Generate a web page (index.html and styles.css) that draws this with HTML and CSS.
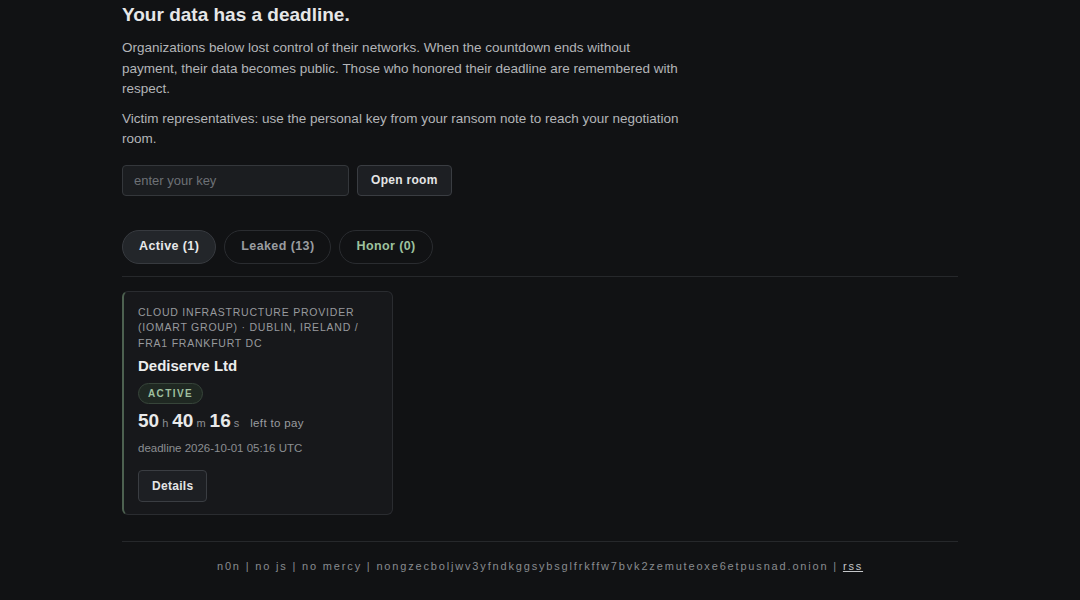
FILE: index.html
```html
<!DOCTYPE html>
<html lang="en">
<head>
<meta charset="utf-8">
<title>Your data has a deadline.</title>
<link rel="stylesheet" href="styles.css">
</head>
<body>
<main class="wrap">
  <h1 class="title">Your data has a deadline.</h1>
  <p class="lead">Organizations below lost control of their networks. When the countdown ends without payment, their data becomes public. Those who honored their deadline are remembered with respect.</p>
  <p class="lead">Victim representatives: use the personal key from your ransom note to reach your negotiation room.</p>
  <form class="keyform">
    <input class="keyinput" type="text" placeholder="enter your key">
    <button class="btn" type="button">Open room</button>
  </form>
  <nav class="tabs">
    <span class="tab tab-active">Active (1)</span>
    <span class="tab tab-muted">Leaked (13)</span>
    <span class="tab tab-honor">Honor (0)</span>
  </nav>
  <hr class="rule">
  <section class="grid">
    <article class="card">
      <div class="cat">Cloud infrastructure provider (iomart Group) · Dublin, Ireland / FRA1 Frankfurt DC</div>
      <h2 class="name">Dediserve Ltd</h2>
      <span class="badge">ACTIVE</span>
      <div class="count">
        <span class="num">50</span><span class="unit">h</span>
        <span class="num">40</span><span class="unit">m</span>
        <span class="num">16</span><span class="unit">s</span>
        <span class="left">left to pay</span>
      </div>
      <div class="deadline">deadline 2026-10-01 05:16 UTC</div>
      <button class="btn btn-details" type="button">Details</button>
    </article>
  </section>
  <hr class="rule rule-foot">
  <footer class="foot">n0n | no js | no mercy | nongzecboljwv3yfndkggsybsglfrkffw7bvk2zemuteoxe6etpusnad.onion | <a class="rss" href="#">rss</a></footer>
</main>
</body>
</html>
```
FILE: styles.css
```css
* { box-sizing: border-box; }
html, body {
  margin: 0;
  background: #111214;
  color: #b5b7ba;
  font-family: "Liberation Sans", Arial, sans-serif;
}
.wrap {
  width: 836px;
  margin: 0 auto;
  padding-top: 4px;
}
.title {
  margin: 0 0 12px;
  font-size: 19px;
  line-height: 22px;
  font-weight: 700;
  color: #e6e7e8;
}
.lead {
  margin: 0 0 9px;
  max-width: 562px;
  font-size: 13.5px;
  line-height: 20.5px;
  color: #b3b5b8;
}
.keyform {
  display: flex;
  gap: 8px;
  margin-top: 15px;
}
.keyinput {
  width: 227px;
  height: 31px;
  padding: 0 11px;
  background: #1b1d20;
  border: 1px solid #34373b;
  border-radius: 4px;
  color: #ddd;
  font-family: inherit;
  font-size: 13px;
  outline: none;
}
.keyinput::placeholder { color: #6d7176; }
.btn {
  height: 31px;
  padding: 0 13px;
  background: #1d1f23;
  border: 1px solid #3a3d42;
  border-radius: 4px;
  color: #e4e5e6;
  font-family: inherit;
  font-size: 12px;
  font-weight: 700;
  letter-spacing: 0.3px;
}
.tabs {
  display: flex;
  gap: 8px;
  margin-top: 34px;
}
.tab {
  display: inline-flex;
  align-items: center;
  height: 34px;
  padding: 0 16px 1px;
  border: 1px solid #2a2c30;
  border-radius: 17px;
  font-size: 12.5px;
  font-weight: 700;
  letter-spacing: 0.4px;
}
.tab-active { background: #23262a; border-color: #373a3f; color: #e8e9ea; }
.tab-muted { color: #9a9ca0; }
.tab-honor { color: #9ec29f; }
.rule {
  margin: 12px 0 14px;
  border: 0;
  border-top: 1px solid #26282b;
}
.grid { display: flex; }
.card {
  width: 271px;
  padding: 13px 15px 12px 14px;
  background: #17181b;
  border: 1px solid #2a2c30;
  border-left: 2px solid #4d6150;
  border-radius: 6px;
}
.cat {
  font-size: 10.5px;
  line-height: 15.5px;
  letter-spacing: 0.78px;
  text-transform: uppercase;
  color: #979a9e;
}
.name {
  margin: 5px 0 7px;
  font-size: 15px;
  line-height: 20px;
  font-weight: 700;
  color: #eceded;
}
.badge {
  display: inline-block;
  height: 21px;
  padding: 0 9px;
  line-height: 19px;
  background: #1f2822;
  border: 1px solid #37453a;
  border-radius: 11px;
  font-size: 10px;
  font-weight: 700;
  letter-spacing: 1.4px;
  color: #9ebf9f;
}
.count {
  display: flex;
  align-items: baseline;
  margin-top: 6px;
  line-height: 22px;
}
.num {
  font-size: 19px;
  font-weight: 700;
  color: #e8e9ea;
}
.unit {
  margin: 0 4px 0 3px;
  font-size: 11px;
  color: #8c8f93;
}
.left {
  margin-left: 7px;
  font-size: 11.5px;
  letter-spacing: 0.35px;
  color: #999ca0;
}
.deadline {
  margin-top: 6px;
  font-size: 11.5px;
  line-height: 16px;
  color: #8b8e92;
}
.btn-details {
  display: block;
  margin-top: 14px;
  height: 32px;
  padding: 0 13px;
}
.rule-foot { margin: 26px 0 0; }
.foot {
  padding: 17px 0;
  text-align: center;
  font-size: 11px;
  line-height: 14px;
  letter-spacing: 1.83px;
  color: #888b8f;
}
.rss { color: #c4c6c9; text-decoration: underline; }
```
